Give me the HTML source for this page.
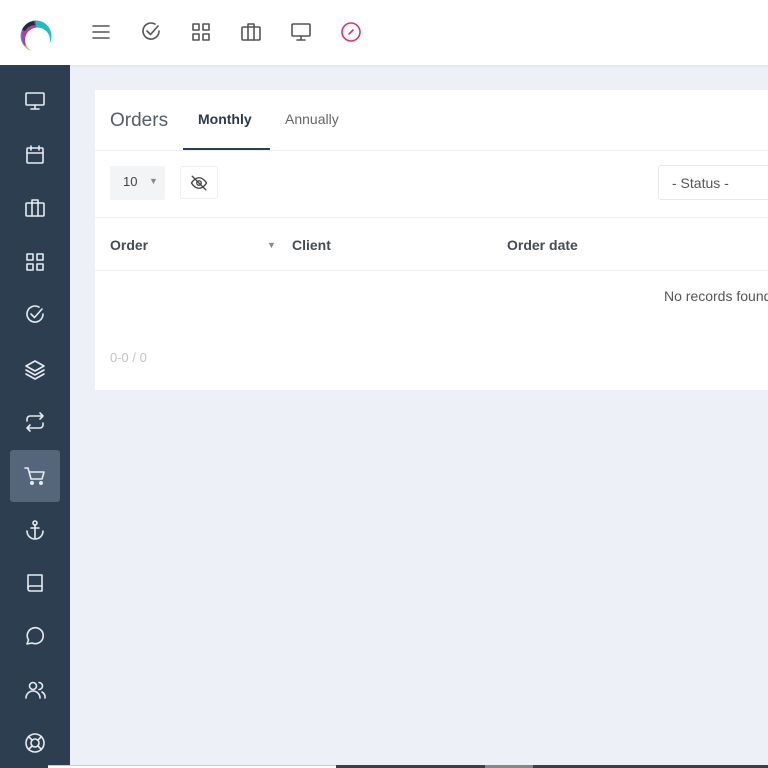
<!DOCTYPE html>
<html><head><meta charset="utf-8"><style>
*{margin:0;padding:0;box-sizing:border-box}
body{width:768px;height:768px;overflow:hidden;background:#eef0f8;font-family:"Liberation Sans",sans-serif;position:relative}
.top{position:absolute;left:0;top:0;width:768px;height:65px;background:#fff;box-shadow:0 1px 3px rgba(0,0,0,.06)}
.logo{position:absolute;left:0;top:0;width:70px;height:65px;background:#fff}
.side{position:absolute;left:0;top:65px;width:70px;height:703px;background:#2e3e51}
.ic{position:absolute;width:24px;height:24px}
.ic svg{width:24px;height:24px;fill:none;stroke-width:1.6;stroke-linecap:round;stroke-linejoin:round}
.sideic .ic svg{stroke:#e6ebf1}
.top .ic svg{stroke:#555}
.active{position:absolute;left:10px;top:450px;width:50px;height:52px;background:#55657a;border-radius:3px}
.card{position:absolute;left:95px;top:90px;width:673px;height:300px;background:#fff}
.t{position:absolute;white-space:nowrap}
</style></head><body>
<div class="top">
 <div class="logo"><svg width="70" height="65" viewBox="0 0 70 65">
  <circle cx="36" cy="36" r="15.5" fill="#1fbcc6"/>
  <path d="M36 20.5 A15.5 15.5 0 0 0 26 47 L36 36 Z" fill="#b2409f"/>
  <path d="M22 30 A15 15 0 0 1 34 21 L35 25 A12 12 0 0 0 25 31 Z" fill="#2a2540"/>
  <path d="M24 45 A13 13 0 0 0 29 50 L31 47 Z" fill="#f0a040"/>
  <circle cx="37.5" cy="40" r="12.5" fill="#fff"/>
 </svg></div>
 <div class="ic" style="left:89px;top:20px"><svg viewBox="0 0 24 24"><path d="M4 6h16M4 12h16M4 18h16"/></svg></div>
 <div class="ic" style="left:139px;top:20px"><svg viewBox="0 0 24 24"><path d="M20 11a8 8 0 1 1-4-6.9"/><path d="M8 11l3.5 3.5L19 6"/></svg></div>
 <div class="ic" style="left:189px;top:20px"><svg viewBox="0 0 24 24"><rect x="4" y="4" width="6" height="6"/><rect x="14" y="4" width="6" height="6"/><rect x="4" y="14" width="6" height="6"/><rect x="14" y="14" width="6" height="6"/></svg></div>
 <div class="ic" style="left:239px;top:20px"><svg viewBox="0 0 24 24"><rect x="3" y="7" width="18" height="13" rx="1"/><path d="M9 7V4h6v3M9 7v13M15 7v13"/></svg></div>
 <div class="ic" style="left:289px;top:20px"><svg viewBox="0 0 24 24"><rect x="3" y="4" width="18" height="12" rx="1"/><path d="M12 16v4M8 20h8"/></svg></div>
 <div class="ic" style="left:339px;top:20px"><svg viewBox="0 0 24 24" style="stroke:#e0336f"><circle cx="12" cy="12" r="9"/><path d="M10 14l4-4"/></svg></div>
</div>
<div class="side"></div>
<div class="active"></div>
<div class="sideic">
 <div class="ic" style="left:23px;top:89px"><svg viewBox="0 0 24 24"><rect x="3" y="4" width="18" height="12" rx="1"/><path d="M12 16v4M8 20h8"/></svg></div>
 <div class="ic" style="left:23px;top:143px"><svg viewBox="0 0 24 24"><rect x="4" y="5" width="16" height="15" rx="1"/><path d="M4 10h16M8 3v4M16 3v4"/></svg></div>
 <div class="ic" style="left:23px;top:196px"><svg viewBox="0 0 24 24"><rect x="3" y="7" width="18" height="13" rx="1"/><path d="M9 7V4h6v3M9 7v13M15 7v13"/></svg></div>
 <div class="ic" style="left:23px;top:250px"><svg viewBox="0 0 24 24"><rect x="4" y="4" width="6" height="6"/><rect x="14" y="4" width="6" height="6"/><rect x="4" y="14" width="6" height="6"/><rect x="14" y="14" width="6" height="6"/></svg></div>
 <div class="ic" style="left:23px;top:303px"><svg viewBox="0 0 24 24"><path d="M20 11a8 8 0 1 1-4-6.9"/><path d="M8 11l3.5 3.5L19 6"/></svg></div>
 <div class="ic" style="left:23px;top:357px"><svg viewBox="0 0 24 24"><path d="M12 4l9 5-9 5-9-5z"/><path d="M3 13l9 5 9-5M3 17l9 5 9-5"/></svg></div>
 <div class="ic" style="left:23px;top:410px"><svg viewBox="0 0 24 24"><path d="M4 11V9a3 3 0 0 1 3-3h13M17 3l3 3-3 3M20 13v2a3 3 0 0 1-3 3H4M7 21l-3-3 3-3"/></svg></div>
 <div class="ic" style="left:23px;top:464px"><svg viewBox="0 0 24 24"><path d="M2 4h3l3 11h11l2-7H7"/><circle cx="9" cy="19" r="1.2" fill="#e6ebf1"/><circle cx="18" cy="19" r="1.2" fill="#e6ebf1"/></svg></div>
 <div class="ic" style="left:23px;top:518px"><svg viewBox="0 0 24 24"><circle cx="12" cy="5" r="2"/><path d="M12 7v13M8 10h8M4 13a8 8 0 0 0 16 0"/></svg></div>
 <div class="ic" style="left:23px;top:571px"><svg viewBox="0 0 24 24"><path d="M5 4h14v16H7a2 2 0 0 1-2-2z"/><path d="M5 17a2 2 0 0 1 2-2h12"/></svg></div>
 <div class="ic" style="left:23px;top:624px"><svg viewBox="0 0 24 24"><path d="M4 20l1.5-4A8 8 0 1 1 9 19z"/></svg></div>
 <div class="ic" style="left:23px;top:678px"><svg viewBox="0 0 24 24"><circle cx="10" cy="8" r="3.5"/><path d="M3 20a7 7 0 0 1 14 0M16 4.5a3.5 3.5 0 0 1 0 7M19 14a6 6 0 0 1 3 6"/></svg></div>
 <div class="ic" style="left:23px;top:731px"><svg viewBox="0 0 24 24"><circle cx="12" cy="12" r="9"/><circle cx="12" cy="12" r="4"/><path d="M5.5 5.5l3.7 3.7M18.5 5.5l-3.7 3.7M5.5 18.5l3.7-3.7M18.5 18.5l-3.7-3.7"/></svg></div>
</div>
<div class="card">
 <div class="t" style="left:15px;top:20px;font-size:19px;color:#555d66">Orders</div>
 <div class="t" style="left:103px;top:21px;font-size:14px;font-weight:bold;color:#2f3a48">Monthly</div>
 <div class="t" style="left:190px;top:21px;font-size:14px;color:#666">Annually</div>
 <div style="position:absolute;left:88px;top:58px;width:87px;height:2px;background:#2e3e51"></div>
 <div style="position:absolute;left:0;top:60px;width:673px;height:1px;background:#eceef1"></div>
 <div style="position:absolute;left:15px;top:76px;width:55px;height:34px;background:#f3f4f6;border-radius:2px"></div>
 <div class="t" style="left:28px;top:84px;font-size:13px;color:#444">10</div>
 <div class="t" style="left:54px;top:86px;font-size:9px;color:#888">▼</div>
 <div style="position:absolute;left:85px;top:76px;width:38px;height:33px;border:1px solid #eceef1;border-radius:3px"></div>
 <svg style="position:absolute;left:95px;top:84px" width="18" height="18" viewBox="0 0 24 24" fill="none" stroke="#444" stroke-width="1.8" stroke-linecap="round"><path d="M2 12s4-7 10-7 10 7 10 7-4 7-10 7S2 12 2 12z"/><circle cx="12" cy="12" r="3"/><path d="M3 3l18 18"/></svg>
 <div style="position:absolute;left:563px;top:75px;width:120px;height:35px;border:1px solid #e6e8ec;border-radius:3px"></div>
 <div class="t" style="left:577px;top:85px;font-size:14px;color:#555">- Status -</div>
 <div style="position:absolute;left:0;top:127px;width:673px;height:1px;background:#eceef1"></div>
 <div class="t" style="left:15px;top:147px;font-size:14px;font-weight:bold;color:#444b52">Order</div>
 <div class="t" style="left:172px;top:150px;font-size:9px;color:#888">▼</div>
 <div class="t" style="left:197px;top:147px;font-size:14px;font-weight:bold;color:#444b52">Client</div>
 <div class="t" style="left:412px;top:147px;font-size:14px;font-weight:bold;color:#444b52">Order date</div>
 <div style="position:absolute;left:0;top:180px;width:673px;height:1px;background:#eceef1"></div>
 <div class="t" style="left:569px;top:198px;font-size:14px;color:#555">No records found</div>
 <div class="t" style="left:15px;top:260px;font-size:13px;color:#c0c4c8">0-0 / 0</div>
</div>
<div style="position:absolute;left:48px;top:765px;width:288px;height:3px;background:#fff;border-top:1px solid #ccc"></div>
<div style="position:absolute;left:336px;top:765px;width:432px;height:3px;background:#3a3f4a"></div>
<div style="position:absolute;left:485px;top:765px;width:48px;height:3px;background:#888"></div>
</body></html>
